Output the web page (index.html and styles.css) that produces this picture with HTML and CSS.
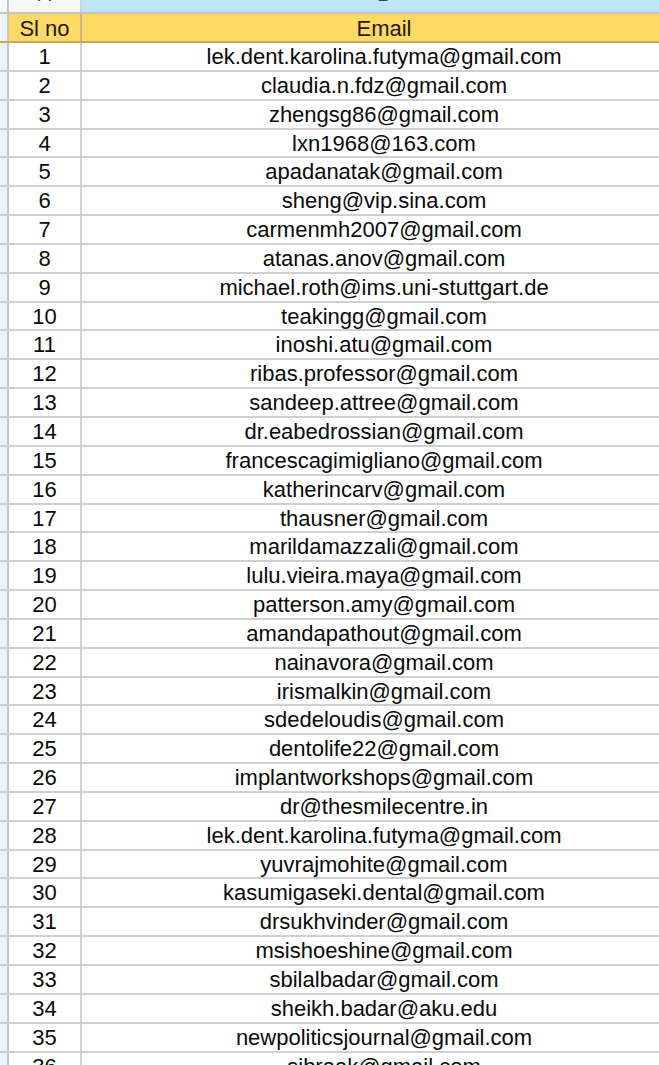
FILE: index.html
```html
<!DOCTYPE html>
<html>
<head>
<meta charset="utf-8">
<link rel="stylesheet" href="styles.css">
</head>
<body>
<div class="sheet">
  <div class="row colhead">
    <div class="rh"></div>
    <div class="num"><span class="letter">A</span></div>
    <div class="email sel"><span class="letter">B</span></div>
  </div>
  <div class="row head">
    <div class="rh"></div>
    <div class="num">Sl no</div>
    <div class="email">Email</div>
  </div>
  <div class="row"><div class="rh"></div><div class="num">1</div><div class="email">lek.dent.karolina.futyma@gmail.com</div></div>
  <div class="row"><div class="rh"></div><div class="num">2</div><div class="email">claudia.n.fdz@gmail.com</div></div>
  <div class="row"><div class="rh"></div><div class="num">3</div><div class="email">zhengsg86@gmail.com</div></div>
  <div class="row"><div class="rh"></div><div class="num">4</div><div class="email">lxn1968@163.com</div></div>
  <div class="row"><div class="rh"></div><div class="num">5</div><div class="email">apadanatak@gmail.com</div></div>
  <div class="row"><div class="rh"></div><div class="num">6</div><div class="email">sheng@vip.sina.com</div></div>
  <div class="row"><div class="rh"></div><div class="num">7</div><div class="email">carmenmh2007@gmail.com</div></div>
  <div class="row"><div class="rh"></div><div class="num">8</div><div class="email">atanas.anov@gmail.com</div></div>
  <div class="row"><div class="rh"></div><div class="num">9</div><div class="email">michael.roth@ims.uni-stuttgart.de</div></div>
  <div class="row"><div class="rh"></div><div class="num">10</div><div class="email">teakingg@gmail.com</div></div>
  <div class="row"><div class="rh"></div><div class="num">11</div><div class="email">inoshi.atu@gmail.com</div></div>
  <div class="row"><div class="rh"></div><div class="num">12</div><div class="email">ribas.professor@gmail.com</div></div>
  <div class="row"><div class="rh"></div><div class="num">13</div><div class="email">sandeep.attree@gmail.com</div></div>
  <div class="row"><div class="rh"></div><div class="num">14</div><div class="email">dr.eabedrossian@gmail.com</div></div>
  <div class="row"><div class="rh"></div><div class="num">15</div><div class="email">francescagimigliano@gmail.com</div></div>
  <div class="row"><div class="rh"></div><div class="num">16</div><div class="email">katherincarv@gmail.com</div></div>
  <div class="row"><div class="rh"></div><div class="num">17</div><div class="email">thausner@gmail.com</div></div>
  <div class="row"><div class="rh"></div><div class="num">18</div><div class="email">marildamazzali@gmail.com</div></div>
  <div class="row"><div class="rh"></div><div class="num">19</div><div class="email">lulu.vieira.maya@gmail.com</div></div>
  <div class="row"><div class="rh"></div><div class="num">20</div><div class="email">patterson.amy@gmail.com</div></div>
  <div class="row"><div class="rh"></div><div class="num">21</div><div class="email">amandapathout@gmail.com</div></div>
  <div class="row"><div class="rh"></div><div class="num">22</div><div class="email">nainavora@gmail.com</div></div>
  <div class="row"><div class="rh"></div><div class="num">23</div><div class="email">irismalkin@gmail.com</div></div>
  <div class="row"><div class="rh"></div><div class="num">24</div><div class="email">sdedeloudis@gmail.com</div></div>
  <div class="row"><div class="rh"></div><div class="num">25</div><div class="email">dentolife22@gmail.com</div></div>
  <div class="row"><div class="rh"></div><div class="num">26</div><div class="email">implantworkshops@gmail.com</div></div>
  <div class="row"><div class="rh"></div><div class="num">27</div><div class="email">dr@thesmilecentre.in</div></div>
  <div class="row"><div class="rh"></div><div class="num">28</div><div class="email">lek.dent.karolina.futyma@gmail.com</div></div>
  <div class="row"><div class="rh"></div><div class="num">29</div><div class="email">yuvrajmohite@gmail.com</div></div>
  <div class="row"><div class="rh"></div><div class="num">30</div><div class="email">kasumigaseki.dental@gmail.com</div></div>
  <div class="row"><div class="rh"></div><div class="num">31</div><div class="email">drsukhvinder@gmail.com</div></div>
  <div class="row"><div class="rh"></div><div class="num">32</div><div class="email">msishoeshine@gmail.com</div></div>
  <div class="row"><div class="rh"></div><div class="num">33</div><div class="email">sbilalbadar@gmail.com</div></div>
  <div class="row"><div class="rh"></div><div class="num">34</div><div class="email">sheikh.badar@aku.edu</div></div>
  <div class="row"><div class="rh"></div><div class="num">35</div><div class="email">newpoliticsjournal@gmail.com</div></div>
  <div class="row"><div class="rh"></div><div class="num">36</div><div class="email">sibraak@gmail.com</div></div>
</div>
</body>
</html>
```

FILE: styles.css
```css
html, body {
  margin: 0;
  padding: 0;
  background: #ffffff;
}
body {
  width: 659px;
  height: 1065px;
  overflow: hidden;
}
.sheet {
  width: 686px;
  font-family: "Liberation Sans", Arial, sans-serif;
  font-size: 22px;
  color: #0a0a0a;
}
.row {
  display: flex;
  box-sizing: border-box;
  height: 28.85px;
  border-bottom: 2px solid #cfcfcf;
  line-height: 26.85px;
}
.rh {
  flex: 0 0 9px;
  box-sizing: border-box;
  background: #eef3fa;
  border-right: 2px solid #c3c7cc;
}
.num {
  flex: 0 0 73px;
  box-sizing: border-box;
  border-right: 2px solid #d2d2d2;
  text-align: center;
  padding-top: 1px;
  white-space: nowrap;
}
.email {
  flex: 0 0 604px;
  text-align: center;
  padding-top: 1px;
  white-space: nowrap;
}
.colhead {
  height: 14px;
  line-height: 14px;
  border-bottom: 2px solid #c6c6c6;
  overflow: hidden;
}
.colhead .rh {
  background: #f6f8fa;
}
.colhead .num {
  background: #f8f9fa;
  padding-top: 0;
  overflow: hidden;
}
.colhead .email {
  padding-top: 0;
  overflow: hidden;
}
.colhead .sel {
  background: #bde5fc;
}
.letter {
  display: block;
  margin-top: -17px;
  line-height: 22px;
  font-size: 20px;
  color: #3c4248;
}
.head {
  height: 29px;
  line-height: 27px;
  border-bottom: 2px solid #c8a955;
}
.head .rh {
  background: #eef3fa;
}
.head .num,
.head .email {
  background: #ffd966;
  color: #1e1a10;
}
.head .num {
  border-right-color: #c9b88a;
}
```
